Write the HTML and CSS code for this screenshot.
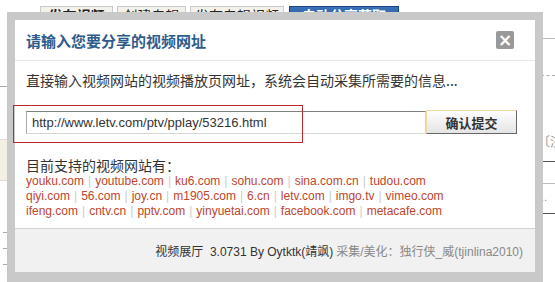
FILE: index.html
```html
<!DOCTYPE html>
<html lang="zh-CN">
<head>
    <meta charset="UTF-8">
    <title>视频展厅 - 自动分享获取</title>
    <link rel="stylesheet" href="styles.css">
</head>
<body>
    <div class="page">
        <div class="tabs">
            <span class="tab t1">发布视频</span>
            <span class="tab t2">创建专辑</span>
            <span class="tab t3">发布专辑视频</span>
            <span class="tab tab-active">自动分享获取</span>
        </div>
        <div class="page-body">
            <div class="side-left">
                <div class="left-line"></div>
                <div class="left-box"></div>
                <div class="left-dash first"></div>
                <div class="left-dash"></div>
                <div class="left-dash"></div>
            </div>
            <div class="side-right">
                <div class="right-row r1"></div>
                <div class="right-row r2 dashed"></div>
                <div class="right-text">〔济</div>
                <div class="right-row r3 dark"></div>
                <div class="right-row r4"></div>
                <div class="right-dots">...</div>
                <div class="right-row r5 dark"></div>
            </div>
        </div>

        <div class="mask">
            <div class="dialog">
                <div class="dialog-header">
                    <span class="dialog-title">请输入您要分享的视频网址</span>
                    <button class="close-btn">×</button>
                </div>
                <div class="dialog-body">
                    <p class="desc">直接输入视频网站的视频播放页网址，系统会自动采集所需要的信息...</p>
                    <div class="url-row">
                        <input class="url-input" type="text" value="http://www.letv.com/ptv/pplay/53216.html">
                        <button class="submit-btn">确认提交</button>
                    </div>
                    <p class="support-title">目前支持的视频网站有：</p>
                    <div class="sites">
                        <div class="site-line">
                            <a>youku.com</a><i>|</i><a>youtube.com</a><i>|</i><a>ku6.com</a><i>|</i><a>sohu.com</a><i>|</i><a>sina.com.cn</a><i>|</i><a>tudou.com</a>
                        </div>
                        <div class="site-line">
                            <a>qiyi.com</a><i>|</i><a>56.com</a><i>|</i><a>joy.cn</a><i>|</i><a>m1905.com</a><i>|</i><a>6.cn</a><i>|</i><a>letv.com</a><i>|</i><a>imgo.tv</a><i>|</i><a>vimeo.com</a>
                        </div>
                        <div class="site-line">
                            <a>ifeng.com</a><i>|</i><a>cntv.cn</a><i>|</i><a>pptv.com</a><i>|</i><a>yinyuetai.com</a><i>|</i><a>facebook.com</a><i>|</i><a>metacafe.com</a>
                        </div>
                    </div>
                </div>
                <div class="dialog-footer">
                    <span class="credit">视频展厅&nbsp; 3.0731 By Oytktk(靖飒)</span>
                    <span class="credit-gray">采集/美化：独行侠_威(tjinlina2010)</span>
                </div>
            </div>
            <div class="mark"></div>
        </div>
    </div>
</body>
</html>
```

FILE: styles.css
```css
body {
    margin: 0;
    background: #fff;
    font-family: "Liberation Sans", Arial, "Noto Sans CJK SC", sans-serif;
    color: #333;
}

.page {
    position: relative;
    width: 555px;
    height: 282px;
    overflow: hidden;
}

/* background page */
.tabs {
    display: flex;
    gap: 4px;
    padding: 6px 0 0 40px;
}

.tab {
    height: 23px;
    padding-top: 1px;
    line-height: 14px;
    text-align: center;
    background: #f4f1ea;
    border: 1px solid #c9c9c9;
    font-size: 14px;
    font-weight: bold;
    color: #222;
    font-family: "Noto Sans CJK SC", sans-serif;
}

.t1 { width: 71px; }
.t2 { width: 67px; font-weight: normal; }
.t3 { width: 92px; font-weight: normal; }

.tab-active {
    width: 108px;
    margin-left: 1px;
    background: linear-gradient(#3a70b8, #1e4f94);
    border-color: #1c4684;
    color: #fff;
}

.page-body {
    display: flex;
    justify-content: space-between;
}

.side-left {
    width: 10px;
    padding-top: 54px;
}

.left-line {
    height: 1px;
    background: #aaa;
}

.left-box {
    margin-top: 52px;
    height: 40px;
    background: #f4efe3;
    border-top: 1px solid #ddd;
    border-bottom: 1px solid #ddd;
}

.left-dash {
    width: 4px;
    margin-top: 15px;
    margin-left: 3px;
    height: 1px;
    background: #aaa;
}

.left-dash.first {
    margin-top: 51px;
}

.side-right {
    width: 14px;
}

.right-row {
    height: 1px;
    background: #bbb;
}

.r1 { margin-top: 6px; }
.r2 { margin-top: 36px; }
.r3 { margin-top: 12px; }
.r4 { margin-top: 21px; }
.r5 { margin-top: 11px; }

.dashed {
    background: none;
    border-top: 1px dashed #aaa;
    height: 0;
}

.dark {
    background: #555;
}

.right-text {
    margin-top: 57px;
    margin-left: -4px;
    font-size: 13px;
    line-height: 16px;
    color: #999;
    white-space: nowrap;
    font-family: "Noto Sans CJK SC", sans-serif;
}

.right-dots {
    margin-top: 8px;
    font-size: 11px;
    line-height: 10px;
    color: #999;
    margin-left: -3px;
}

/* modal */
.mask {
    position: absolute;
    left: 7px;
    top: 12px;
    width: 520px;
    padding: 8px;
    background: #c9c9c9;
    height: 270px;
}

.dialog {
    background: #fff;
    height: 252px;
    display: flex;
    flex-direction: column;
}

.dialog-header {
    height: 40px;
    border-bottom: 1px solid #e8e8e8;
    display: flex;
    align-items: center;
    justify-content: space-between;
    padding: 0 21px 0 11px;
}

.dialog-title {
    font-family: "Noto Sans CJK SC", sans-serif;
    font-size: 15px;
    font-weight: bold;
    color: #2d5c8c;
}

.close-btn {
    width: 18px;
    height: 18px;
    padding: 0;
    border: none;
    border-radius: 2px;
    background: #999;
    color: #fff;
    font-size: 17px;
    font-weight: bold;
    line-height: 18px;
    font-family: "DejaVu Sans", sans-serif;
    margin-top: -1px;
}

.dialog-body {
    flex: 1;
    padding: 9px 11px 0;
}

.desc {
    margin: 0;
    font-family: "Noto Sans CJK SC", sans-serif;
    font-size: 14px;
    line-height: 20px;
    color: #333;
    white-space: nowrap;
}

.url-row {
    display: flex;
    margin-top: 20px;
}

.url-input {
    box-sizing: border-box;
    width: 400px;
    height: 23px;
    margin: 1px 0 0;
    padding: 0 5px;
    border: 1px solid #d6d6d6;
    border-top-color: #7f7f7f;
    border-left-color: #a9a9a9;
    font-family: "Liberation Sans", Arial, sans-serif;
    font-size: 13px;
    color: #333;
    outline: none;
}

.submit-btn {
    box-sizing: border-box;
    width: 91px;
    height: 24px;
    padding: 0;
    border: 1px solid #666;
    border-top-color: #f2d9a2;
    border-left-color: #f2d9a2;
    background: linear-gradient(#fefefe, #e4e4e4);
    font-family: "Noto Sans CJK SC", sans-serif;
    font-size: 13px;
    font-weight: bold;
    color: #333;
}

.support-title {
    margin: 22px 0 0;
    font-family: "Noto Sans CJK SC", sans-serif;
    font-size: 14px;
    line-height: 18px;
    color: #333;
}

.site-line {
    font-size: 12px;
    line-height: 15px;
    white-space: nowrap;
}

.site-line a {
    color: #c0452b;
}

.site-line i {
    font-style: normal;
    color: #ccc;
    margin: 0 4px;
}

.dialog-footer {
    height: 43px;
    border-top: 1px solid #d2d2d2;
    background: #f1f1f1;
    display: flex;
    align-items: center;
    justify-content: flex-end;
    padding: 0 12px 0 0;
    font-size: 12px;
    white-space: pre;
}

.credit {
    color: #333;
}

.credit-gray {
    color: #888;
    margin-left: 3px;
}

/* red annotation around the url field */
.mark {
    position: absolute;
    left: 6px;
    top: 93px;
    width: 288px;
    height: 36px;
    border: 1px solid #c0282d;
}
```
